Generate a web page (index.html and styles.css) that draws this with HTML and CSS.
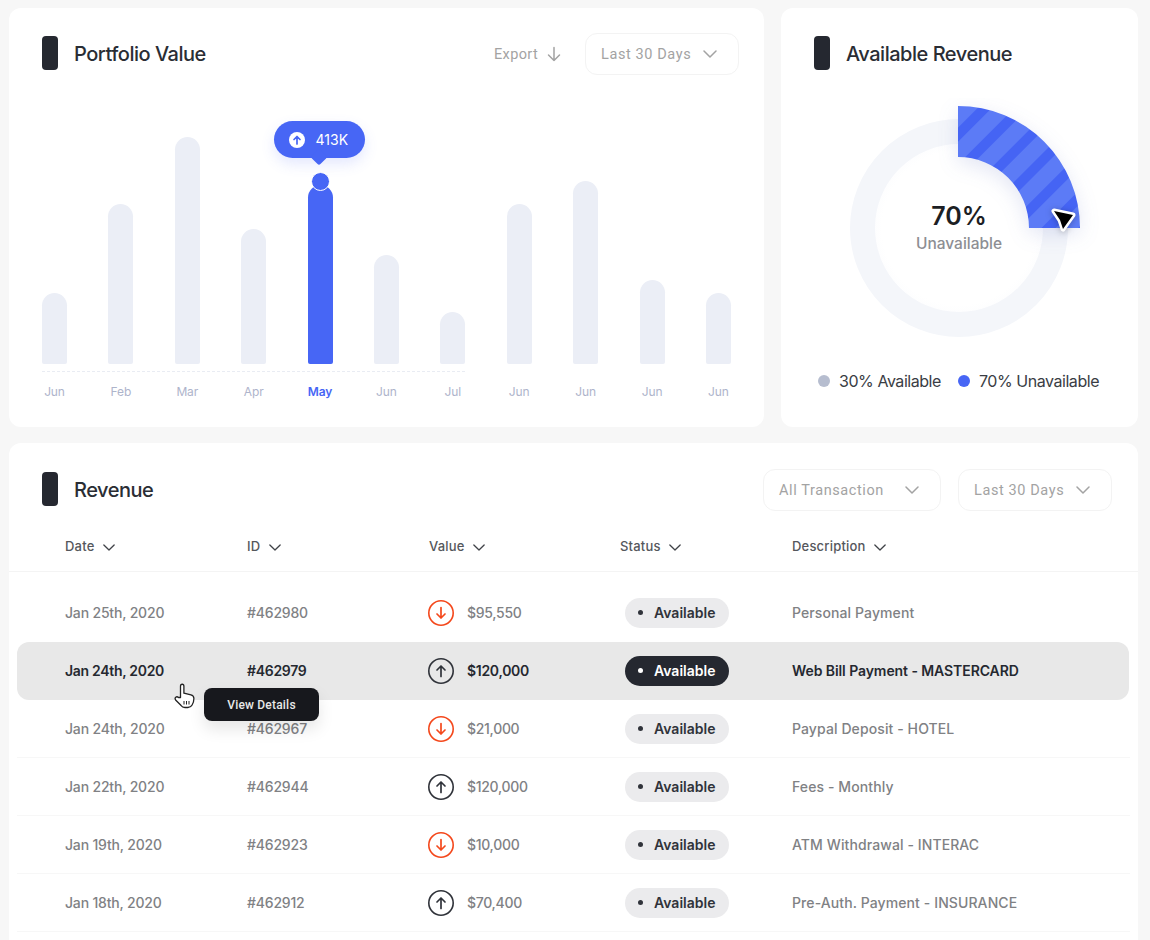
FILE: index.html
```html
<!DOCTYPE html>
<html lang="en">

<head>
    <meta charset="UTF-8">
    <title>Dashboard</title>
    <link rel="stylesheet" href="styles.css">
</head>

<body>
    <svg class="defs" width="0" height="0">
        <symbol id="chev" viewBox="0 0 14 8"><path d="M1 1l6 6 6-6" fill="none" stroke="currentColor" stroke-width="1.5" stroke-linecap="round" stroke-linejoin="round"/></symbol>
        <symbol id="down" viewBox="0 0 28 28"><circle cx="14" cy="14" r="12.2" fill="none" stroke="#f4481c" stroke-width="1.6"/><path d="M14 8.500v10.500M10 15l4 4 4-4" fill="none" stroke="#f4481c" stroke-width="1.7" stroke-linecap="round" stroke-linejoin="round"/></symbol>
        <symbol id="up" viewBox="0 0 28 28"><circle cx="14" cy="14" r="12.2" fill="none" stroke="#30333a" stroke-width="1.6"/><path d="M14 19.500V9M10 13l4-4 4 4" fill="none" stroke="#30333a" stroke-width="1.7" stroke-linecap="round" stroke-linejoin="round"/></symbol>
    </svg>

    <div class="top">
        <section class="card portfolio">
            <div class="head">
                <span class="mark"></span>
                <h2>Portfolio Value</h2>
                <a class="export">Export
                    <svg width="14" height="16" viewBox="0 0 14 16"><path d="M7 1.500v13M1.500 9L7 14.500 12.500 9" fill="none" stroke="currentColor" stroke-width="1.5" stroke-linecap="round" stroke-linejoin="round"/></svg>
                </a>
                <div class="select sel-a">Last 30 Days <svg class="chev"><use href="#chev"/></svg></div>
            </div>
            <div class="chart">
                <div class="dash"></div>
                <div class="col"><div class="bar" style="height:71px"></div><span>Jun</span></div>
                <div class="col"><div class="bar" style="height:160px"></div><span>Feb</span></div>
                <div class="col"><div class="bar" style="height:227px"></div><span>Mar</span></div>
                <div class="col"><div class="bar" style="height:135px"></div><span>Apr</span></div>
                <div class="col active">
                    <div class="bar" style="height:179px">
                        <i class="dot"></i>
                        <div class="bubble">
                            <svg width="16" height="16" viewBox="0 0 16 16"><circle cx="8" cy="8" r="8" fill="#fff"/><path d="M8 12V5.500M5 7.500l3-3 3 3" fill="none" stroke="#4766f5" stroke-width="1.7" stroke-linecap="round" stroke-linejoin="round"/></svg>
                            413K
                        </div>
                    </div>
                    <span>May</span>
                </div>
                <div class="col"><div class="bar" style="height:109px"></div><span>Jun</span></div>
                <div class="col"><div class="bar" style="height:52px"></div><span>Jul</span></div>
                <div class="col"><div class="bar" style="height:160px"></div><span>Jun</span></div>
                <div class="col"><div class="bar" style="height:183px"></div><span>Jun</span></div>
                <div class="col"><div class="bar" style="height:84px"></div><span>Jun</span></div>
                <div class="col"><div class="bar" style="height:71px"></div><span>Jun</span></div>
            </div>
        </section>

        <section class="card avail">
            <div class="head">
                <span class="mark"></span>
                <h2>Available Revenue</h2>
            </div>
            <div class="donut">
                <svg width="300" height="260" viewBox="0 0 300 260">
                    <defs>
                        <pattern id="stripes" width="26" height="26" patternUnits="userSpaceOnUse" patternTransform="rotate(45 149 130)">
                            <rect width="26" height="26" fill="#5c7bf6"/>
                            <rect x="0" width="10" height="26" fill="#4564f4"/>
                        </pattern>
                        <radialGradient id="glow" cx="50%" cy="50%" r="50%">
                            <stop offset="0" stop-color="#fff"/>
                            <stop offset="0.8" stop-color="#fff"/>
                            <stop offset="1" stop-color="#fafbfd"/>
                        </radialGradient>
                    </defs>
                    <circle cx="150" cy="130" r="96.5" fill="url(#glow)" stroke="#f4f6fa" stroke-width="25"/>
                    <path class="slice" d="M149 8A122 122 0 0 1 271 130H220A71 71 0 0 0 149 59Z" fill="url(#stripes)"/>
                    <path class="arrow" d="M245 113L264 117 254 131 251 122Z" fill="#000" stroke="#fff" stroke-width="5" stroke-linejoin="round"/>
                </svg>
                <div class="donut-text">
                    <b>70%</b>
                    <span>Unavailable</span>
                </div>
            </div>
            <div class="legend">
                <span class="key"><i class="k-grey"></i>30% Available</span>
                <span class="key"><i class="k-blue"></i>70% Unavailable</span>
            </div>
        </section>
    </div>

    <section class="card revenue">
        <div class="head">
            <span class="mark"></span>
            <h2>Revenue</h2>
            <div class="select sel-b">All Transaction <svg class="chev"><use href="#chev"/></svg></div>
            <div class="select sel-c">Last 30 Days <svg class="chev"><use href="#chev"/></svg></div>
        </div>

        <div class="thead">
            <span>Date <svg class="small"><use href="#chev"/></svg></span>
            <span>ID <svg class="small"><use href="#chev"/></svg></span>
            <span>Value <svg class="small"><use href="#chev"/></svg></span>
            <span>Status <svg class="small"><use href="#chev"/></svg></span>
            <span>Description <svg class="small"><use href="#chev"/></svg></span>
        </div>

        <div class="rows">
            <div class="row nl">
                <span>Jan 25th, 2020</span><span>#462980</span>
                <span class="val"><svg class="ic"><use href="#down"/></svg>$95,550</span>
                <span class="pill"><i></i>Available</span>
                <span class="desc">Personal Payment</span>
            </div>
            <div class="row hover">
                <span>Jan 24th, 2020</span><span>#462979</span>
                <span class="val"><svg class="ic"><use href="#up"/></svg>$120,000</span>
                <span class="pill"><i></i>Available</span>
                <span class="desc">Web Bill Payment - MASTERCARD</span>
                <svg class="hand" width="22" height="26" viewBox="0 0 22 26"><path d="M6.500 14.500V3.200c0-2.600 3.400-2.600 3.400 0v7l7 1.700c2 .5 3 1.700 3 3.500 0 2.500-.6 4.600-1.800 6.600-.8 1.500-2.400 2.500-4.200 2.500h-3c-1.700 0-3-.8-4-2.200L1.600 17c-1.500-2.300 1-4.200 2.900-2.500z" fill="#fff" stroke="#222" stroke-width="1.300" stroke-linejoin="round"/><path d="M10 18v3.500M12.500 18v3.500M15 18v3.500" stroke="#222" stroke-width="1"/></svg>
                <div class="tip">View Details</div>
            </div>
            <div class="row">
                <span>Jan 24th, 2020</span><span>#462967</span>
                <span class="val"><svg class="ic"><use href="#down"/></svg>$21,000</span>
                <span class="pill"><i></i>Available</span>
                <span class="desc">Paypal Deposit - HOTEL</span>
            </div>
            <div class="row">
                <span>Jan 22th, 2020</span><span>#462944</span>
                <span class="val"><svg class="ic"><use href="#up"/></svg>$120,000</span>
                <span class="pill"><i></i>Available</span>
                <span class="desc">Fees - Monthly</span>
            </div>
            <div class="row">
                <span>Jan 19th, 2020</span><span>#462923</span>
                <span class="val"><svg class="ic"><use href="#down"/></svg>$10,000</span>
                <span class="pill"><i></i>Available</span>
                <span class="desc">ATM Withdrawal - INTERAC</span>
            </div>
            <div class="row">
                <span>Jan 18th, 2020</span><span>#462912</span>
                <span class="val"><svg class="ic"><use href="#up"/></svg>$70,400</span>
                <span class="pill"><i></i>Available</span>
                <span class="desc">Pre-Auth. Payment - INSURANCE</span>
            </div>
        </div>
    </section>
</body>

</html>
```

FILE: styles.css
```css
* {
    padding: 0;
    margin: 0;
    box-sizing: border-box;
}

html,
body {
    height: 940px;
    overflow: hidden;
}

body {
    background: #f7f7f7;
    padding: 8px 12px 0 9px;
    font-family: Inter, "Liberation Sans", sans-serif;
    color: #252830;
}

.defs {
    position: absolute;
}

.top {
    display: grid;
    grid-template-columns: 755px 357px;
    column-gap: 17px;
    margin-bottom: 16px;
}

.card {
    background: #fff;
    border-radius: 12px;
}

.portfolio,
.avail {
    height: 419px;
    padding-top: 25px;
}

.revenue {
    height: 520px;
    padding-top: 26px;
}

.head {
    display: flex;
    align-items: center;
    height: 42px;
    padding-left: 33px;
}

.mark {
    width: 16px;
    height: 34px;
    background: #252830;
    border-radius: 4px;
    margin-right: 16px;
    margin-bottom: 2px;
}

h2 {
    font-size: 20px;
    font-weight: 500;
    letter-spacing: -0.48px;
    color: #2a2d34;
    margin-bottom: 1px;
}

.export {
    margin-left: auto;
    display: flex;
    align-items: center;
    gap: 9px;
    font-family: Roboto, sans-serif;
    font-size: 14.5px;
    letter-spacing: 0.35px;
    color: #a3a3a3;
}

.select {
    display: flex;
    align-items: center;
    justify-content: space-between;
    height: 42px;
    border: 1.5px solid #f3f3f3;
    border-radius: 12px;
    padding: 0 21px 0 15px;
    font-family: Roboto, sans-serif;
    font-size: 14.5px;
    letter-spacing: 0.6px;
    color: #a3a3a3;
}

.chev {
    width: 14px;
    height: 8px;
}

.small {
    width: 12px;
    height: 7px;
    margin-left: 5px;
    color: #404348;
    vertical-align: 0;
}

.sel-a {
    width: 154px;
    margin-left: 24px;
    margin-right: 25px;
}

.sel-b {
    width: 178px;
    margin-left: auto;
}

.sel-c {
    width: 154px;
    margin-left: 17px;
    margin-right: 26px;
}

.chart {
    position: relative;
    display: flex;
    justify-content: space-between;
    height: 325px;
    padding: 0 33px;
}

.col {
    position: relative;
    width: 25px;
    display: flex;
    flex-direction: column;
    align-items: center;
    justify-content: flex-end;
}

.col span {
    margin-top: 20px;
    height: 16px;
    line-height: 16px;
    font-size: 12px;
    letter-spacing: -0.1px;
    color: #aeb4cb;
    white-space: nowrap;
}

.bar {
    position: relative;
    width: 25px;
    background: #ebeef6;
    border-radius: 12.5px 12.5px 2px 2px;
}

.active .bar {
    background: #4766f5;
}

.active span {
    color: #4766f5;
    font-weight: 600;
}

.dot {
    position: absolute;
    left: 3px;
    top: -13px;
    width: 19px;
    height: 19px;
    border-radius: 50%;
    background: #4766f5;
    border: 1.5px solid #fff;
}

.bubble {
    position: absolute;
    left: -34px;
    top: -64px;
    width: 91px;
    height: 37px;
    display: flex;
    align-items: center;
    gap: 11px;
    padding-left: 15px;
    background: #4766f5;
    border-radius: 19px;
    color: #fff;
    font-size: 14px;
    box-shadow: 0 6px 14px rgba(71, 102, 245, 0.15);
}

.bubble::after {
    content: "";
    position: absolute;
    left: 39px;
    bottom: -5px;
    width: 12px;
    height: 12px;
    background: #4766f5;
    border-radius: 2px;
    transform: rotate(45deg);
}

.dash {
    position: absolute;
    left: 33px;
    width: 423px;
    bottom: 28px;
    border-top: 1px dashed #e9ecf3;
}

.donut {
    position: relative;
    width: 300px;
    margin: 23px 0 0 28px;
}

.donut svg {
    display: block;
}

.slice {
    filter: drop-shadow(0 6px 10px rgba(60, 80, 180, 0.14));
}

.arrow {
    paint-order: stroke;
    filter: drop-shadow(0 1px 3px rgba(0, 0, 0, 0.25));
}

.donut-text {
    position: absolute;
    left: 0;
    top: 103px;
    width: 300px;
    text-align: center;
}

.donut-text b {
    display: block;
    font-size: 25px;
    line-height: 30px;
    font-weight: 600;
    color: #1c1e24;
}

.donut-text span {
    display: block;
    margin-top: 3px;
    font-size: 15.5px;
    line-height: 20px;
    font-weight: 500;
    color: #8d8e93;
}

.legend {
    display: flex;
    gap: 17px;
    margin: 13px 0 0 37px;
    font-size: 16px;
    letter-spacing: -0.45px;
    color: #3a3d44;
    white-space: nowrap;
}

.key {
    display: flex;
    align-items: center;
    gap: 9px;
    height: 20px;
}

.key i {
    width: 12px;
    height: 12px;
    border-radius: 50%;
}

.k-grey {
    background: #b6bdcf;
}

.k-blue {
    background: #4766f5;
}

.thead,
.row {
    display: grid;
    grid-template-columns: 182px 182px 191px 172px 1fr;
    align-items: center;
    font-size: 14px;
    font-weight: 500;
}

.thead {
    height: 61px;
    padding: 10px 0 0 56px;
    border-bottom: 1px solid #f4f4f4;
    font-size: 13px;
    color: #55575c;
    letter-spacing: 0.2px;
}

.rows {
    margin-top: 12px;
    padding: 0 8px;
}

.row {
    position: relative;
    height: 58px;
    padding-left: 48px;
    color: #808184;
    border-bottom: 1px solid #f7f7f7;
    letter-spacing: -0.18px;
}

.nl {
    border-bottom-color: transparent;
}

.val {
    display: flex;
    align-items: center;
    gap: 12px;
    margin-left: -2px;
    letter-spacing: -0.3px;
}

.desc {
    letter-spacing: 0.1px;
}

.ic {
    width: 28px;
    height: 28px;
}

.pill {
    display: flex;
    align-items: center;
    width: 104px;
    height: 30px;
    margin-left: 5px;
    padding-left: 13px;
    gap: 11px;
    border-radius: 15px;
    background: #ebebed;
    color: #30333a;
    font-weight: 600;
    letter-spacing: 0;
}

.pill i {
    width: 5px;
    height: 5px;
    border-radius: 50%;
    background: #30333a;
}

.hover {
    background: #e8e8e8;
    border-radius: 12px;
    border-bottom-color: transparent;
    width: 1112px;
    color: #252830;
    font-weight: 600;
    letter-spacing: -0.3px;
}

.hover .desc {
    letter-spacing: -0.08px;
}

.hover .pill {
    background: #252830;
    color: #fff;
}

.hover .pill i {
    background: #fff;
}

.hand {
    position: absolute;
    left: 157px;
    top: 41px;
    z-index: 3;
}

.tip {
    position: absolute;
    left: 187px;
    top: 46px;
    z-index: 2;
    width: 115px;
    height: 33px;
    line-height: 34px;
    text-align: center;
    background: #17181d;
    border-radius: 8px;
    font-family: Roboto, sans-serif;
    font-size: 12px;
    font-weight: 500;
    letter-spacing: 0.2px;
    color: #e8e8e8;
    box-shadow: 0 8px 16px rgba(0, 0, 0, 0.1);
}
```
